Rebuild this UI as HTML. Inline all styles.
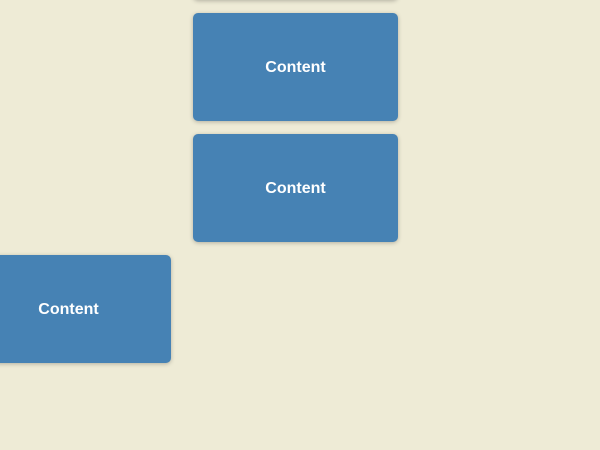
<!DOCTYPE html>
<html><head><style>
html,body{margin:0;padding:0;width:600px;height:450px;overflow:hidden;background:#eeebd6;}
.c{position:absolute;box-sizing:border-box;padding-top:2px;width:205px;height:108px;background:#4682b4;border-radius:5px;box-shadow:0 1px 4px rgba(0,0,0,0.25);color:#fff;font:bold 16px "Liberation Sans",sans-serif;display:flex;align-items:center;justify-content:center;}
</style></head><body>
<div class="c" style="left:193px;top:-108px"></div>
<div class="c" style="left:193px;top:13px">Content</div>
<div class="c" style="left:193px;top:134px">Content</div>
<div class="c" style="left:-34px;top:255px">Content</div>
</body></html>
